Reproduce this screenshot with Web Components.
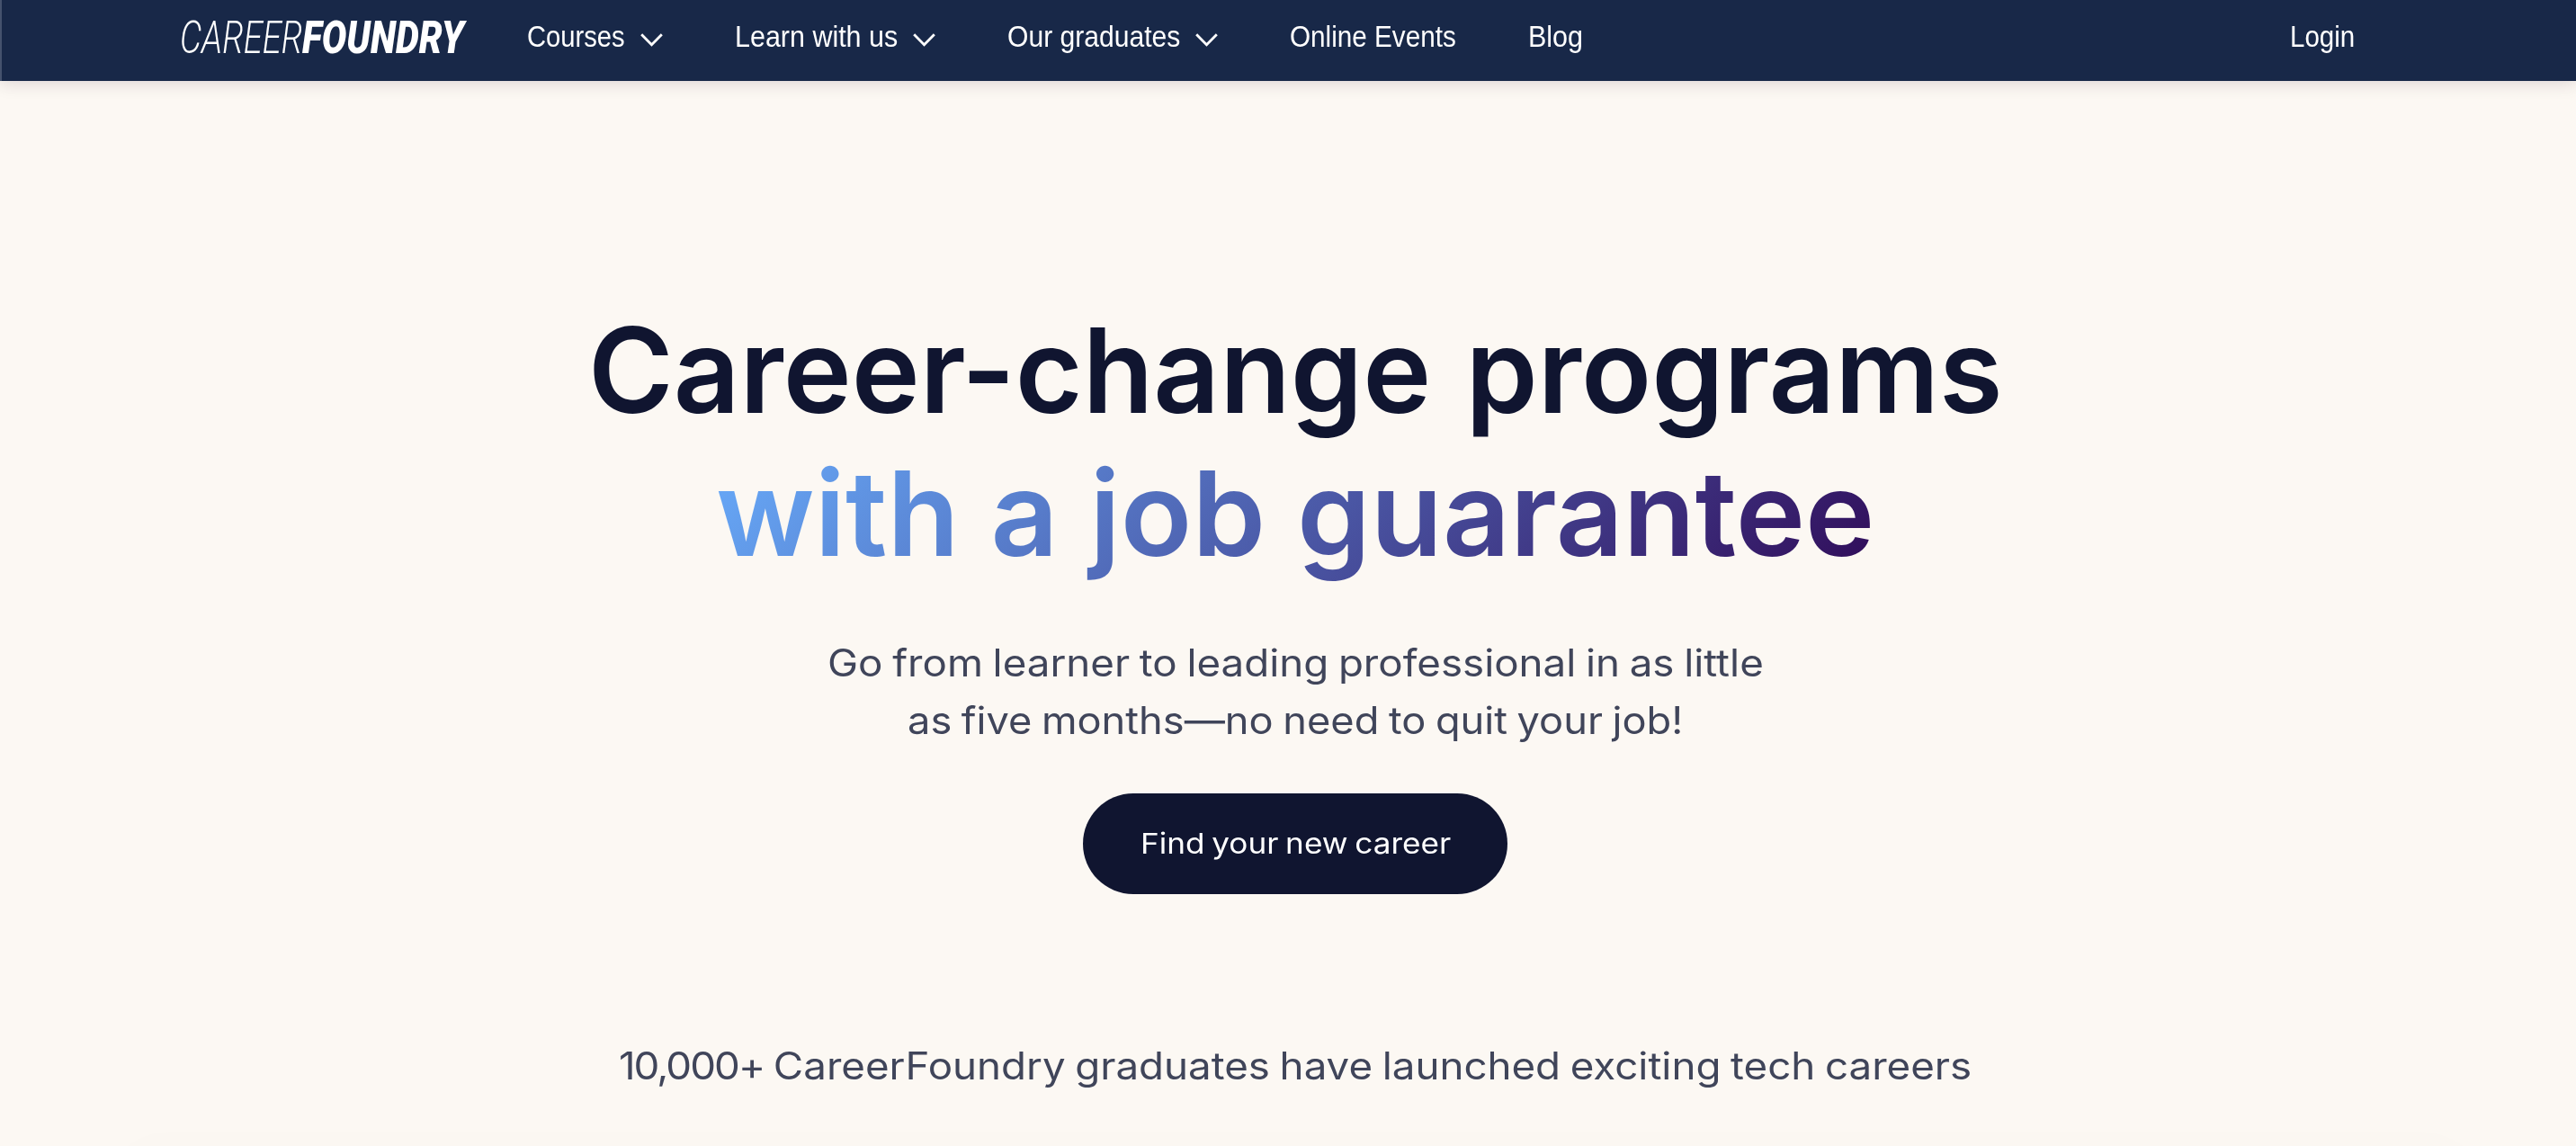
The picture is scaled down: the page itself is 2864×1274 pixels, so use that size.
<!DOCTYPE html>
<html lang="en">
<head>
  <meta charset="utf-8">
  <title>CareerFoundry</title>
  <style>
    body {
      margin: 0;
      overflow: hidden;
      background: #fcf8f3;
      font-family: Inter, sans-serif;
    }
  </style>
</head>
<body>
  <cf-page></cf-page>

  <script>
    // One line of text, scaled horizontally to the length given in "width".
    class FitLine extends HTMLElement {
      constructor() {
        super();

        this.attachShadow({ mode: 'open' });
        this.shadowRoot.innerHTML = `
          <style>
            :host {
              display: block;
              white-space: nowrap;
              text-align: left;
            }

            span {
              display: inline-block;
              vertical-align: top;
              transform-origin: 0 50%;
              background: var(--line-fill, none);
              -webkit-background-clip: text;
              background-clip: text;
            }
          </style>

          <span><slot></slot></span>
        `;
      }

      connectedCallback() {
        const width = Number(this.getAttribute('width'));
        const span = this.shadowRoot.querySelector('span');
        this.style.width = `${width}px`;
        span.style.transform = `scaleX(${width / span.offsetWidth})`;
      }
    }

    class Logo extends HTMLElement {
      constructor() {
        super();

        this.attachShadow({ mode: 'open' });
        this.shadowRoot.innerHTML = `
          <style>
            :host {
              display: flex;
              font: italic 300 50.5px/90px Roboto, sans-serif;
              color: #fff;
            }

            .bold {
              font-weight: 900;
            }
          </style>

          <cf-line width="136">CAREER</cf-line>
          <cf-line class="bold" width="180">FOUNDRY</cf-line>
        `;
      }
    }

    class NavItem extends HTMLElement {
      constructor() {
        super();

        this.attachShadow({ mode: 'open' });
        this.shadowRoot.innerHTML = `
          <style>
            :host {
              display: flex;
              align-items: center;
              gap: 17px;
              font: 400 34px/81px "Liberation Sans", Arial, sans-serif;
              color: #fff;
            }

            svg {
              display: none;
              margin-top: 7px;
            }

            :host([menu]) svg {
              display: block;
            }
          </style>

          <slot></slot>
          <svg width="25" height="15" viewBox="0 0 25 15" fill="none" stroke="#fff" stroke-width="2.8">
            <path d="M1.2 1.2 12.5 12.8 23.8 1.2"/>
          </svg>
        `;
      }
    }

    class NavBar extends HTMLElement {
      constructor() {
        super();

        this.attachShadow({ mode: 'open' });
        this.shadowRoot.innerHTML = `
          <style>
            :host {
              display: flex;
              align-items: flex-start;
              box-sizing: border-box;
              height: 90px;
              padding: 0 246px 0 198px;
              background: #182848;
              border-left: 2px solid #45526d;
              box-shadow: 0 2px 18px rgba(50, 20, 50, .16);
            }

            cf-logo {
              height: 84px;
              margin: -3px 70px 0 0;
            }

            nav {
              display: flex;
              gap: 80px;
              flex: 1;
            }

            .login {
              margin-left: auto;
            }
          </style>

          <cf-logo></cf-logo>
          <nav>
            <cf-nav-item menu><cf-line width="109">Courses</cf-line></cf-nav-item>
            <cf-nav-item menu><cf-line width="181">Learn with us</cf-line></cf-nav-item>
            <cf-nav-item menu><cf-line width="192">Our graduates</cf-line></cf-nav-item>
            <cf-nav-item><cf-line width="185">Online Events</cf-line></cf-nav-item>
            <cf-nav-item><cf-line width="61">Blog</cf-line></cf-nav-item>
            <cf-nav-item class="login"><cf-line width="72">Login</cf-line></cf-nav-item>
          </nav>
        `;
      }
    }

    class PillButton extends HTMLElement {
      constructor() {
        super();

        this.attachShadow({ mode: 'open' });
        this.shadowRoot.innerHTML = `
          <style>
            :host {
              display: block;
            }

            button {
              display: flex;
              align-items: center;
              justify-content: center;
              width: 472px;
              height: 112px;
              padding: 0;
              border: 0;
              border-radius: 56px;
              background: #101530;
              color: #fff;
              font: 400 31.5px/40px Inter, sans-serif;
              word-spacing: -2px;
            }
          </style>

          <button><slot></slot></button>
        `;
      }
    }

    class Hero extends HTMLElement {
      constructor() {
        super();

        this.attachShadow({ mode: 'open' });
        this.shadowRoot.innerHTML = `
          <style>
            :host {
              display: flex;
              flex-direction: column;
              align-items: center;
              padding: 242px 0 0 16px;
              color: #40455a;
              font: 400 42px/64px Inter, sans-serif;
            }

            h1 {
              display: flex;
              flex-direction: column;
              align-items: center;
              margin: 0 0 55px;
              color: #101530;
              font-size: 131px;
              font-weight: 625;
              line-height: 159px;
              word-spacing: 6px;
            }

            .accent {
              --line-fill: linear-gradient(135deg, #68acfb, #300b58);
              color: transparent;
              word-spacing: 2px;
            }

            p {
              display: flex;
              flex-direction: column;
              align-items: center;
              margin: 0;
              word-spacing: -2px;
            }

            .count {
              letter-spacing: -1.8px;
            }

            cf-button {
              margin: 49px 0 159px;
            }

            .panel {
              width: 2660px;
              height: 80px;
              margin-top: 41px;
              border-radius: 80px 80px 0 0;
              background: #fbf7f2;
            }
          </style>

          <h1>
            <cf-line width="1573">Career-change programs</cf-line>
            <cf-line class="accent" width="1288">with a job guarantee</cf-line>
          </h1>
          <p>
            <cf-line width="1041">Go from learner to leading professional in as little</cf-line>
            <cf-line width="862">as five months—no need to quit your job!</cf-line>
          </p>
          <cf-button><cf-line width="345">Find your new career</cf-line></cf-button>
          <p><cf-line width="1504"><span class="count">10,000+</span> CareerFoundry graduates have launched exciting tech careers</cf-line></p>
          <div class="panel"></div>
        `;
      }
    }

    class Page extends HTMLElement {
      constructor() {
        super();

        this.attachShadow({ mode: 'open' });
        this.shadowRoot.innerHTML = `
          <style>
            :host {
              display: block;
              height: 1274px;
              overflow: hidden;
            }
          </style>

          <cf-nav-bar></cf-nav-bar>
          <cf-hero></cf-hero>
        `;
      }
    }

    customElements.define('cf-page', Page);
    customElements.define('cf-nav-bar', NavBar);
    customElements.define('cf-logo', Logo);
    customElements.define('cf-nav-item', NavItem);
    customElements.define('cf-hero', Hero);
    customElements.define('cf-button', PillButton);
    customElements.define('cf-line', FitLine);
  </script>
</body>
</html>
